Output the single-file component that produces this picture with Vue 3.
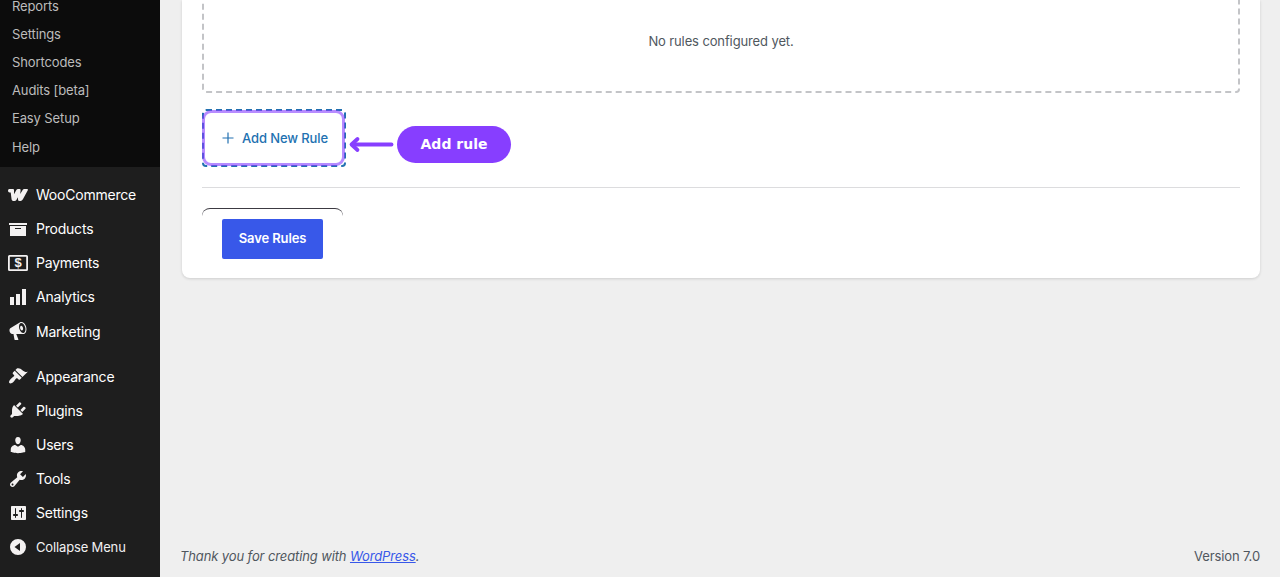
<script setup>
import { ref } from 'vue'

const submenu = ['Reports', 'Settings', 'Shortcodes', 'Audits [beta]', 'Easy Setup', 'Help']

const storeMenu = [
  {
    label: 'WooCommerce',
    cls: 'woo',
    path: 'M1.2 4H5q1 0 1 1v4.2L8.5 4.8Q9 4 10 4h1.600q1.200 0 1 1.200L12.200 9l2.600-4.300Q15.300 4 16.200 4h2.900q1.400 0 .7 1.300l-4.900 9Q14 16 12.500 16h-1q-1.500 0-1.500-1.500v-2.300l-1.600 2.700Q7.700 16 6.500 16H5.200q-1.400 0-1.600-1.400L2.700 7.500H1.600Q0 7.500 0 5.700 0 4 1.200 4z'
  },
  { label: 'Products', path: 'M19 4v2H1V4h18zM2 7h16v10H2V7zm11 3V9H7v1h6z' },
  {
    label: 'Payments',
    symbol: '$',
    path: 'M1.500 2h17Q20 2 20 3.500v13q0 1.500-1.500 1.500h-17Q0 18 0 16.500v-13Q0 2 1.500 2zm.3 1.800v12.400h16.400V3.800z'
  },
  { label: 'Analytics', path: 'M18 18V2h-4v16h4zm-6 0V7H8v11h4zm-6 0v-8H2v8h4z' },
  {
    label: 'Marketing',
    path: 'M18.150 5.940c.46 1.620.38 3.220-.02 4.480-.42 1.280-1.260 2.180-2.300 2.480-.16.06-.26.06-.4.06-.06.02-.12.02-.18.02-.06.02-.14.02-.22.02h-6.800l2.220 5.500c.02.14-.06.26-.14.34-.08.1-.24.16-.34.16H6.950c-.1 0-.26-.06-.34-.16-.08-.08-.16-.2-.14-.34l-1-5.500H4.250l-.02-.02c-.5.06-1.080-.18-1.540-.62s-.88-1.080-1.060-1.880c-.24-.8-.2-1.560-.02-2.200.18-.62.58-1.080 1.060-1.300l.02-.02 9-5.400c.1-.06.18-.1.24-.16.06-.04.14-.08.24-.12.16-.08.28-.12.5-.18 1.040-.3 2.240.1 3.220.98s1.840 2.240 2.260 3.860zm-2.580 5.980h-.02c.4-.1.74-.34 1.040-.7.58-.7.86-1.760.86-3.040 0-.64-.1-1.300-.28-1.980-.34-1.360-1.020-2.500-1.780-3.240s-1.680-1.100-2.460-.88c-.82.22-1.400.96-1.700 2-.32 1.040-.28 2.360.06 3.720.38 1.360 1 2.500 1.800 3.240.78.74 1.620 1.100 2.480.88zm-2.540-7.080c.22-.04.42-.02.62.04.38.16.76.48 1.020 1s.42 1.200.42 1.780c0 .3-.04.56-.12.8-.18.48-.44.84-.86.94-.34.1-.8-.06-1.140-.4s-.64-.86-.78-1.500c-.18-.62-.12-1.240.02-1.720s.48-.84.82-.94z'
  }
]

const adminMenu = [
  {
    label: 'Appearance',
    path: 'M14.480 11.060L7.410 3.990l1.500-1.500c.5-.56 2.300-.47 3.510.32 1.210.8 1.430 1.280 2.910 2.100 1.180.64 2.450 1.260 4.450.85zm-.71.71L6.700 4.700 4.930 6.470c-.39.39-.39 1.020 0 1.410l1.060 1.060c.39.39.39 1.030 0 1.420-.6.6-1.430 1.110-2.210 1.690-.35.26-.7.53-1.010.84C1.430 14.230.4 16.080 1.400 17.070c.99 1 2.840-.03 4.180-1.360.31-.31.58-.66.85-1.020.57-.78 1.080-1.610 1.690-2.210.39-.39 1.020-.39 1.410 0l1.060 1.060c.39.39 1.020.39 1.410 0z'
  },
  {
    label: 'Plugins',
    path: 'M13.110 4.360L9.870 7.600 8 5.730l3.240-3.240c.35-.34 1.050-.2 1.560.32.52.51.66 1.210.31 1.550zm-8 1.770l.91-1.120 9.010 9.010-1.190.84c-.71.71-2.630 1.160-3.820 1.160H6.140L4.900 17.260c-.59.59-1.540.59-2.120 0-.59-.58-.59-1.530 0-2.120l1.240-1.240v-3.880c0-1.130.4-3.190 1.090-3.890zm7.260 3.970l3.240-3.240c.34-.35 1.040-.21 1.550.31.52.51.66 1.210.31 1.550l-3.240 3.250z'
  },
  {
    label: 'Users',
    path: 'M10 9.250c-2.270 0-2.730-3.440-2.730-3.440C7 4.020 7.820 2 9.970 2c2.160 0 2.980 2.020 2.710 3.810 0 0-.41 3.440-2.680 3.440zm0 2.570L12.720 10c2.390 0 4.520 2.330 4.520 4.530v2.490s-3.650 1.130-7.240 1.130c-3.650 0-7.240-1.130-7.240-1.130v-2.490c0-2.250 1.940-4.480 4.470-4.480z'
  },
  {
    label: 'Tools',
    path: 'M16.680 9.770c-1.340 1.340-3.300 1.670-4.950.99l-5.410 6.520c-.99.99-2.590.99-3.580 0s-.99-2.590 0-3.570l6.520-5.420c-.68-1.650-.35-3.610.99-4.950 1.280-1.280 3.120-1.620 4.720-1.060l-2.890 2.890 2.820 2.820 2.860-2.870c.53 1.580.18 3.390-1.080 4.650zM3.810 16.210c.4.39 1.040.39 1.430 0 .4-.4.4-1.040 0-1.430-.39-.4-1.030-.4-1.430 0-.39.39-.39 1.030 0 1.430z'
  },
  {
    label: 'Settings',
    path: 'M18 16V4c0-.55-.45-1-1-1H4c-.55 0-1 .45-1 1v12c0 .55.45 1 1 1h13c.55 0 1-.45 1-1zM8 11h1c.55 0 1 .45 1 1s-.45 1-1 1H8v1.500c0 .28-.22.5-.5.5s-.5-.22-.5-.5V13H6c-.55 0-1-.45-1-1s.45-1 1-1h1V5.500c0-.28.22-.5.5-.5s.5.22.5.5V11zm5-2h-1c-.55 0-1-.45-1-1s.45-1 1-1h1V5.500c0-.28.22-.5.5-.5s.5.22.5.5V7h1c.55 0 1 .45 1 1s-.45 1-1 1h-1v5.500c0 .28-.22.5-.5.5s-.5-.22-.5-.5V9z'
  },
  {
    label: 'Collapse Menu',
    cls: 'collapse',
    path: 'M10 2a8 8 0 1 0 0 16 8 8 0 0 0 0-16zm2 4v8l-5.500-4z'
  }
]

const menus = [storeMenu, adminMenu]
const rules = ref([])

function addRule() {
  rules.value.push({ id: rules.value.length + 1 })
}
</script>

<template>
  <div class="admin">
    <nav class="sidebar">
      <ul class="submenu">
        <li v-for="item in submenu" :key="item">{{ item }}</li>
      </ul>

      <ul v-for="(menu, i) in menus" :key="i" class="menu">
        <li v-for="item in menu" :key="item.label" :class="item.cls">
          <svg class="icon" viewBox="0 0 20 20">
            <path :d="item.path" fill-rule="evenodd" />
            <text v-if="item.symbol" x="10" y="14.4" text-anchor="middle">{{ item.symbol }}</text>
          </svg>
          <span>{{ item.label }}</span>
        </li>
      </ul>
    </nav>

    <main class="content">
      <section class="card">
        <div class="rules">
          <p v-if="!rules.length">No rules configured yet.</p>
          <p v-for="rule in rules" :key="rule.id">Rule {{ rule.id }}</p>
        </div>

        <div class="add-row">
          <button class="add-button" @click="addRule">
            <svg class="plus" viewBox="0 0 12 12">
              <path d="M6 .5v11M.5 6h11" />
            </svg>
            <span>Add New Rule</span>
          </button>
          <div class="highlight"></div>
          <div class="callout">
            <svg class="arrow" viewBox="0 0 46 18">
              <path d="M43.500 8.500H5" />
              <path d="M9.500 3L3.500 8.500 9.500 14" />
            </svg>
            <span class="pill">Add rule</span>
          </div>
        </div>

        <div class="actions">
          <div class="save-frame">
            <button class="save-button">Save Rules</button>
          </div>
        </div>
      </section>

      <footer class="footer">
        <em>Thank you for creating with <a href="#">WordPress</a>.</em>
        <span class="version">Version 7.0</span>
      </footer>
    </main>
  </div>
</template>

<style>
body {
  margin: 0;
  background: #efefef;
}
</style>

<style scoped>
.admin {
  display: flex;
  height: 577px;
  overflow: hidden;
  background: #efefef;
  font-family: Inter, "Liberation Sans", sans-serif;
  font-size: 13px;
  letter-spacing: -0.12px;
  color: #50575e;
}

.sidebar {
  width: 160px;
  flex: none;
  background: #1e1e1e;
}

ul {
  list-style: none;
  margin: 0;
  padding: 0;
}

.submenu {
  margin-top: -8px;
  padding-bottom: 6.2px;
  background: #0c0c0c;
  color: #bcbcbc;
}

.submenu li {
  height: 28.12px;
  line-height: 28px;
  padding-left: 12px;
}

.menu {
  margin-top: 10.8px;
  color: #fff;
  font-size: 14px;
  letter-spacing: -0.22px;
}

.menu + .menu {
  margin-top: 11.2px;
}

.menu li {
  display: flex;
  align-items: center;
  gap: 8px;
  height: 34.1px;
  padding-left: 8px;
}

.menu .collapse {
  margin-top: 0.4px;
  font-size: 13px;
  letter-spacing: -0.15px;
  color: #f0f0f1;
}

.icon {
  width: 20px;
  height: 20px;
  fill: #f3f1f1;
}

.icon text {
  font: bold 13px "Liberation Sans", sans-serif;
  letter-spacing: 0;
}

.content {
  flex: 1;
  display: flex;
  flex-direction: column;
  justify-content: space-between;
  padding: 0 20px 0 22px;
}

.card {
  height: 278px;
  box-sizing: border-box;
  padding: 0 20px;
  background: #fff;
  border-radius: 0 0 8px 8px;
  box-shadow: 0 1px 3px rgba(0, 0, 0, 0.14);
}

.rules {
  height: 103px;
  margin-top: -10px;
  padding-bottom: 1px;
  box-sizing: border-box;
  display: flex;
  align-items: center;
  justify-content: center;
  border: 2px dashed #c3c4c7;
  border-radius: 4px;
}

.rules p {
  margin: 0;
}

.add-row {
  position: relative;
  display: flex;
  margin-top: 16px;
  padding-bottom: 20px;
  border-bottom: 1px solid #dcdcde;
}

button {
  font-family: inherit;
  font-size: 13px;
  letter-spacing: -0.12px;
  cursor: pointer;
}

.add-button {
  display: flex;
  align-items: center;
  justify-content: center;
  gap: 8px;
  width: 144px;
  height: 58px;
  padding: 0 0 1px 2px;
  background: #fff;
  border: 2px dashed #2271b1;
  border-radius: 4px;
  color: #2271b1;
  font-weight: 500;
}

.plus {
  width: 12px;
  height: 12px;
  margin-top: 1px;
  fill: none;
  stroke: #2271b1;
  stroke-width: 1.2;
}

/* tutorial marker drawn over the button */
.highlight {
  position: absolute;
  left: 0;
  top: 1px;
  width: 143px;
  height: 56px;
  box-sizing: border-box;
  border: 3px solid rgba(135, 62, 255, 0.6);
  border-radius: 9px;
  pointer-events: none;
}

.callout {
  position: absolute;
  left: 146px;
  top: 17px;
  display: flex;
  align-items: center;
  gap: 3px;
}

.arrow {
  width: 46px;
  height: 18px;
  fill: none;
  stroke: #873eff;
  stroke-width: 3.8;
  stroke-linecap: round;
  stroke-linejoin: round;
}

.pill {
  width: 114px;
  height: 37px;
  line-height: 36px;
  border-radius: 19px;
  background: #873eff;
  color: #fff;
  font-family: "DejaVu Sans", sans-serif;
  font-weight: bold;
  font-size: 14px;
  letter-spacing: 0;
  text-align: center;
}

.actions {
  padding-top: 20px;
}

.save-frame {
  width: 141px;
  height: 8px;
  box-sizing: border-box;
  padding: 10px 20px;
  border-top: 1px solid #3c3a42;
  border-radius: 8px 8px 0 0;
}

.save-button {
  width: 101px;
  height: 40px;
  padding: 0 0 2px;
  border: none;
  border-radius: 2px;
  background: #3858e9;
  color: #fff;
  font-weight: 600;
}

.footer {
  display: flex;
  justify-content: space-between;
  margin-left: -2px;
  padding-bottom: 11px;
  line-height: 19px;
}

.footer a {
  color: #3858e9;
}
</style>
